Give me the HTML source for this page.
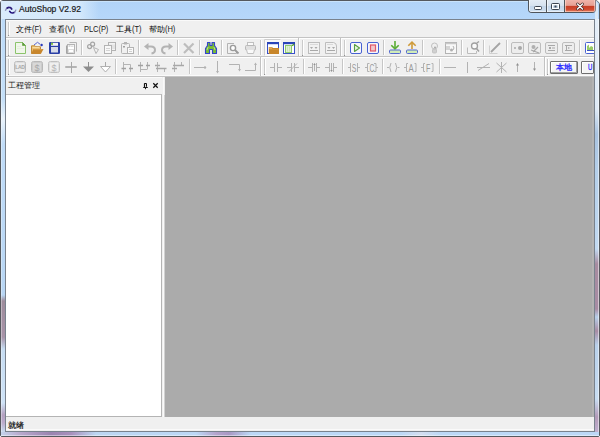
<!DOCTYPE html>
<html><head><meta charset="utf-8">
<style>
html,body{margin:0;padding:0;width:600px;height:437px;overflow:hidden;background:#fff;}
body{font-family:"Liberation Sans",sans-serif;position:relative;}
.a{position:absolute;}
.t{white-space:nowrap;color:#000;}
.l{display:inline-block;font-size:9px;letter-spacing:-0.1px;transform:scaleX(.84);transform-origin:0 50%;color:#202020}
</style></head><body>
<!-- window frame -->
<div class="a" style="left:0;top:0;width:598px;height:435px;border:1px solid #55595e;border-radius:3px 5px 2px 2px;background:#b8d7f6;"></div>
<!-- title bar gradient -->
<div class="a" style="left:1px;top:1px;width:598px;height:18px;border-radius:2px 4px 0 0;background:linear-gradient(#c9e3fb 0,#c9e3fb 1px,#b2d4f8 1px,#b6d7fa 100%);"></div>
<div class="a" style="left:1px;top:1px;width:100px;height:18px;background:linear-gradient(to right,rgba(222,238,252,.9) 0,rgba(218,236,252,.85) 78px,rgba(218,236,252,0) 98px);"></div>
<div class="a" style="left:595px;top:2px;width:3px;height:17px;background:#dbeaf7;border-radius:0 3px 0 0"></div>
<!-- left frame -->
<div class="a" style="left:1px;top:19px;width:4px;height:413px;background:linear-gradient(to bottom,#bcdaf8 0,#c4dff8 80px,#eaf3fb 100px,#c0dcf8 125px,#b8d6f4 276px,#9e8c9c 282px,#a893a8 318px,#c6dcf2 330px,#cfe3f7 384px,#b4a0c0 396px,#bcaccc 404px,#c8dcf0 413px);"></div>
<div class="a" style="left:1px;top:19px;width:1px;height:413px;background:rgba(255,255,255,.35)"></div>
<!-- right frame -->
<div class="a" style="left:595px;top:19px;width:4px;height:413px;background:linear-gradient(to bottom,#e4eef8 0,#dfeaf6 90px,#a9c3e0 115px,#b4cfea 150px,#c2daf2 230px,#a78ca0 245px,#a88ca4 290px,#b7d0ea 298px,#a88ca4 312px,#b8d0ea 326px,#c8ddf2 380px,#b39ab8 398px,#c0b0d0 413px);"></div>
<div class="a" style="left:598px;top:19px;width:1px;height:413px;background:rgba(255,255,255,.5)"></div>
<!-- bottom frame -->
<div class="a" style="left:1px;top:432px;width:598px;height:4px;background:linear-gradient(to right,#c4d4ec 0,#b8a8cc 20px,#9a84b0 50px,#a890bc 70px,#bcd6f2 95px,#bcd8f6 195px,#b4a4cc 215px,#a898c4 228px,#bcd8f6 250px,#bcd8f6 400px,#d4def0 420px,#bcd8f6 440px,#bcd8f6 598px);"></div>
<div class="a" style="left:1px;top:435px;width:598px;height:1px;background:rgba(255,255,255,.45)"></div>
<!-- client -->
<div class="a" style="left:5px;top:19px;width:588px;height:411px;border:1px solid #79828d;background:#f0f0f0;"></div>
<div class="a" style="left:6px;top:20px;width:588px;height:1px;background:#fafafa"></div>

<!-- title -->
<svg class="a" style="left:0;top:0" width="20" height="19">
  <path d="M5.3 10.8 Q6 8.6 7.6 7.8" stroke="#8c8cb4" stroke-width="1.3" fill="none"/>
  <path d="M7.2 8 Q8.2 7.3 9.3 7.4 Q10.9 7.5 11.7 9" stroke="#2c1c7c" stroke-width="1.7" fill="none" stroke-linecap="round"/>
  <path d="M9.7 11.4 Q10.7 13.1 12.4 13 Q13.7 12.9 14.4 12.3" stroke="#20107a" stroke-width="1.7" fill="none" stroke-linecap="round"/>
  <path d="M14.1 12.5 Q15.4 11.6 16 9.6" stroke="#8c8cb4" stroke-width="1.3" fill="none"/>
</svg>
<div class="a t" style="left:19px;top:3px;font-size:8.5px;line-height:12px;color:#1a1a1a;-webkit-text-stroke:0.2px #1a1a1a">AutoShop V2.92</div>

<!-- caption buttons -->
<div class="a" style="left:528px;top:0;width:66px;height:12px;border:1px solid #4f555c;border-right-color:#8c7c84;border-top:none;border-radius:0 0 4px 4px;overflow:hidden;background:#c9d9ea">
  <div class="a" style="left:0;top:0;width:17px;height:12px;background:linear-gradient(#e3ebf4,#d5e1ee 50%,#c3d5e9 51%,#cfe0f1);box-shadow:inset 1px 0 0 rgba(255,255,255,.6),inset 0 -1px 0 rgba(255,255,255,.5)"></div>
  <div class="a" style="left:17px;top:0;width:1px;height:12px;background:#4f555c"></div>
  <div class="a" style="left:18px;top:0;width:17px;height:12px;background:linear-gradient(#e3ebf4,#d5e1ee 50%,#c3d5e9 51%,#cfe0f1);box-shadow:inset 1px 0 0 rgba(255,255,255,.6),inset 0 -1px 0 rgba(255,255,255,.5)"></div>
  <div class="a" style="left:35px;top:0;width:1px;height:12px;background:#4f555c"></div>
  <div class="a" style="left:36px;top:0;width:30px;height:12px;background:linear-gradient(#f0b4aa,#e6a094 45%,#c83e26 52%,#d04a30 78%,#e4866a);box-shadow:inset 1px 0 0 rgba(255,220,210,.7),inset -1px 0 0 rgba(255,220,210,.6),inset 0 -1px 0 rgba(255,200,180,.7)"></div>
</div>
<svg class="a" style="left:528px;top:0" width="68" height="14">
  <rect x="6.5" y="6.5" width="7" height="3" rx="1" fill="#fff" stroke="#3c4450" stroke-width="1"/>
  <rect x="23.5" y="3.5" width="8" height="6" rx="1" fill="none" stroke="#3c4450" stroke-width="1"/>
  <rect x="24.5" y="4.5" width="6" height="4" fill="none" stroke="#fff" stroke-width="1"/>
  <rect x="26.5" y="5.5" width="2" height="2" fill="#3c4450"/>
  <path d="M49.5 4 L54.5 9 M54.5 4 L49.5 9" stroke="#4a3434" stroke-width="2.8" stroke-linecap="round"/>
  <path d="M49.5 4 L54.5 9 M54.5 4 L49.5 9" stroke="#fff" stroke-width="1.3" stroke-linecap="round"/>
</svg>

<!-- rebar lines -->
<div class="a" style="left:6px;top:37px;width:588px;height:1px;background:#c4c4c4"></div>
<div class="a" style="left:6px;top:38px;width:588px;height:1px;background:#fff"></div>
<div class="a" style="left:6px;top:56px;width:588px;height:1px;background:#c4c4c4"></div>
<div class="a" style="left:6px;top:57px;width:588px;height:1px;background:#fff"></div>
<div class="a" style="left:6px;top:75px;width:588px;height:1px;background:#fafafa"></div>
<div class="a" style="left:6px;top:76px;width:588px;height:1px;background:#c4c4c4"></div>
<div class="a" style="left:6px;top:77px;width:159px;height:1px;background:#fafafa"></div>

<!-- menu -->
<div class="a t" style="left:16px;top:23px;font-size:8px;line-height:12px;">文件<span class="l">(F)</span></div>
<div class="a t" style="left:49px;top:23px;font-size:8px;line-height:12px;">查看<span class="l">(V)</span></div>
<div class="a t" style="left:84px;top:23px;font-size:8px;line-height:12px;"><span class="l">PLC(P)</span></div>
<div class="a t" style="left:116px;top:23px;font-size:8px;line-height:12px;">工具<span class="l">(T)</span></div>
<div class="a t" style="left:149px;top:23px;font-size:8px;line-height:12px;">帮助<span class="l">(H)</span></div>

<!-- TOOLBARS SVG -->
<!--TBSTART-->
<svg class="a" style="left:0;top:0" width="600" height="80">

  <path d="M8.5 22 V35 M8.5 40 V55 M8.5 59 V74 M302.5 40 V55 M344.5 40 V55 M264.5 59 V74 M547.5 59 V74" stroke="#cacaca"/>
  <path d="M9.5 22 V35 M9.5 40 V55 M9.5 59 V74 M303.5 40 V55 M345.5 40 V55 M265.5 59 V74 M548.5 59 V74" stroke="#fff"/>
  <path d="M8 35.5 h1 M8 55.5 h1 M8 74.5 h1 M302 55.5 h1 M344 55.5 h1 M264 74.5 h1 M547 74.5 h1" stroke="#909090"/>
  <path d="M298.5 38 V56 M340.5 38 V56 M260.5 57 V76 M544.5 57 V76" stroke="#c2c2c2"/>
  <path d="M299.5 38 V56 M341.5 38 V56 M261.5 57 V76 M545.5 57 V76" stroke="#fff"/>
  <path d="M81.5 40 V55 M138.5 40 V55 M177.5 40 V55 M199.5 40 V55 M221.5 40 V55 M260.5 40 V55 M383.5 40 V55 M422.5 40 V55 M461.5 40 V55 M483.5 40 V55 M506.5 40 V55 M579.5 40 V55" stroke="#c6c6c6"/>
  <path d="M82.5 40 V55 M139.5 40 V55 M178.5 40 V55 M200.5 40 V55 M222.5 40 V55 M261.5 40 V55 M384.5 40 V55 M423.5 40 V55 M462.5 40 V55 M484.5 40 V55 M507.5 40 V55 M580.5 40 V55" stroke="#fff"/>
  <path d="M115.5 59 V74 M189.5 59 V74 M303.5 59 V74 M342.5 59 V74 M382.5 59 V74 M439.5 59 V74" stroke="#c6c6c6"/>
  <path d="M116.5 59 V74 M190.5 59 V74 M304.5 59 V74 M343.5 59 V74 M383.5 59 V74 M440.5 59 V74" stroke="#fff"/>

<path d="M15.5 42.5 H22.5 L25.5 45.5 V53.5 H15.5 Z" fill="#f0f6ea" stroke="#8cc46c"/>
<path d="M17 48.5 H24 M17 46.5 H21" stroke="#e2ecd8" stroke-width="0.8"/>
<path d="M22.5 42.5 L25.5 45.5 H22.5 Z" fill="#5a9c38" stroke="#5a9c38" stroke-width="0.6" stroke-linejoin="round"/>
<path d="M34 45 L37.5 42.3 L40 44.2" fill="none" stroke="#5a68d0" stroke-width="1"/>
<circle cx="41.6" cy="45" r="1.2" fill="#2838b8"/>
<path d="M31.5 45.8 H35 L36 46.8 H40.5 V53.5 H31.5 Z" fill="#ecc070" stroke="#c08a38"/>
<path d="M32.5 47.5 H39.5" stroke="#f8dca0" stroke-width="1"/>
<path d="M33.5 49 H43.5 L41 53.8 H31.2 Z" fill="#c8862c"/>
<path d="M33.8 49.6 H42.5" stroke="#d8a050" stroke-width="0.8"/>
<rect x="49" y="42" width="11" height="12" rx="1.2" fill="#2a3fa6"/>
<rect x="51" y="42.8" width="7" height="3" fill="#f4f4f4"/>
<rect x="51" y="42.8" width="2" height="2" fill="#7cc040"/>
<rect x="51" y="47" width="7" height="5.5" fill="#d6dbe8"/>
<path d="M69.5 42.5 H76.5 V51.5" fill="none" stroke="#b3b3b3"/>
<rect x="67.5" y="44.5" width="7" height="9" fill="#fff" stroke="#b3b3b3"/>
<path d="M66.5 45.5 V53.5 H73.5" fill="none" stroke="#a4a4a4"/>
<rect x="68.5" y="45.5" width="2" height="1" fill="#b3b3b3"/><rect x="71" y="45.5" width="2.5" height="1.5" fill="#ddd"/>
<rect x="68.5" y="49.5" width="5" height="3" fill="none" stroke="#dcdcdc"/>
<circle cx="89.6" cy="46.6" r="2" fill="none" stroke="#a4a4a4" stroke-width="1.2"/>
<circle cx="92.6" cy="44.2" r="2" fill="none" stroke="#a4a4a4" stroke-width="1.2"/>
<path d="M93.5 47.5 L98.5 49.5 L96 53.5 Z" fill="#f4f4f4" stroke="#b4b4b4" stroke-width="1"/>
<rect x="108.5" y="42.5" width="7" height="8" fill="#f4f4f4" stroke="#b3b3b3"/>
<path d="M110 44.5 V49 M112 44.5 V49 M114 44.5 V49" stroke="#d4d4d4"/>
<rect x="104.5" y="45.5" width="7" height="8" fill="#f8f8f8" stroke="#b3b3b3"/>
<path d="M106 48.5 H110 M106 50.5 H110" stroke="#d4d4d4"/>
<rect x="121.5" y="43.5" width="8" height="10" rx="1" fill="#f0f0f0" stroke="#b3b3b3"/>
<rect x="124" y="42" width="3" height="2.5" fill="#b3b3b3"/>
<rect x="127.5" y="47.5" width="6" height="6" fill="#fafafa" stroke="#b3b3b3"/>
<path d="M129 49.5 H132 M129 51.5 H132" stroke="#d0d0d0"/>
<rect x="123" y="46" width="2" height="1.5" fill="#a0a0a0"/>
<path d="M147 46.5 H151 Q155 46.5 155 50 Q155 53 151.5 53.5" fill="none" stroke="#b3b3b3" stroke-width="2"/>
<path d="M144 46.5 L148.5 43 V50 Z" fill="#b3b3b3"/>
<path d="M170 46.5 H166 Q162 46.5 162 50 Q162 53 165.5 53.5" fill="none" stroke="#b3b3b3" stroke-width="2"/>
<path d="M173 46.5 L168.5 43 V50 Z" fill="#b3b3b3"/>
<path d="M184 43.5 L193.5 53 M193.5 43.5 L184 53" stroke="#bdbdbd" stroke-width="2.2"/>
<path d="M207.5 42.5 H210 V45.5 H212 V42.5 H214.5 V45.5 L216.5 48.5 V53.5 H212.5 V49.5 H209.5 V53.5 H205.5 V48.5 L207.5 45.5 Z" fill="#78bc34" stroke="#3444cc" stroke-width="1.1" stroke-linejoin="round"/>
<path d="M208 47 L207 50 M214 47 L215 50" stroke="#c8e8a0" stroke-width="0.8"/>
<path d="M227.5 43.5 H234 M227.5 43.5 V53.5 H236.5 V52" fill="none" stroke="#b3b3b3"/>
<circle cx="233" cy="48" r="2.6" fill="#fff" stroke="#9a9a9a" stroke-width="1.4"/>
<path d="M235 50 L238.5 53.5" stroke="#9a9a9a" stroke-width="1.8"/>
<rect x="247.5" y="42.5" width="6" height="3" fill="#fafafa" stroke="#c0c0c0"/>
<rect x="245.5" y="45.5" width="10" height="4.5" rx="1" fill="#e0e0e0" stroke="#b8b8b8"/>
<path d="M246.5 49.5 L247.5 53.5 H253.5 L254.5 49.5" fill="#fafafa" stroke="#c0c0c0"/>
<rect x="264" y="39" width="17" height="17" fill="#f9f9f9"/>
<path d="M264.5 55.5 V39.5 H280.5" fill="none" stroke="#cfcfcf"/>
<rect x="267.5" y="42.5" width="11" height="11" fill="#fff" stroke="#3550c8"/>
<rect x="267" y="42" width="12" height="2.2" fill="#2a44b8"/>
<path d="M268.8 47 H272 L273 48 H279 V54 H268.8 Z" fill="#c8862a"/>
<path d="M269 47.5 H272 V48.6 H269 Z" fill="#ecc078"/>
<path d="M269.5 49.5 H278" stroke="#d89a40" stroke-width="0.6"/>
<rect x="283.5" y="42.5" width="11" height="11" fill="#fff" stroke="#3a52c8"/>
<rect x="283" y="42" width="12" height="2.2" fill="#2a44b8"/>
<rect x="285.5" y="45.5" width="6" height="7" fill="#e2f0d6" stroke="#8ccc68" stroke-width="1"/>
<path d="M287.5 46.5 V51.5 M289.5 46.5 V51.5" stroke="#c4e0ac" stroke-width="0.8"/>
<path d="M292 46 L294 44.2 M292.5 44.3 H294 V45.8" stroke="#58a030" stroke-width="1" fill="none"/>
<rect x="308.5" y="42.5" width="11" height="11" fill="#f2f2f2" stroke="#bdbdbd"/>
<path d="M310 44.5 H318" stroke="#dadada"/>
<path d="M310 47 H313 L311.5 49 Z M314.5 47 H317.5 L316 49 Z" fill="#a8a8a8"/>
<path d="M310 50.5 H318" stroke="#a8a8a8"/>
<path d="M325.5 42.5 H333.5 Q336.5 43 336.5 46 V53.5 H325.5 Z" fill="#f2f2f2" stroke="#bdbdbd"/>
<path d="M327 44.5 H333" stroke="#dadada"/>
<path d="M327.5 47 H330.5 L329 49 Z M332 47 H335 L333.5 49 Z" fill="#a8a8a8"/>
<path d="M327 50.5 H335" stroke="#a8a8a8"/>
<rect x="350.5" y="42.5" width="11" height="11" rx="1.5" fill="#f6f6fc" stroke="#4862d2"/>
<path d="M354.5 44.5 L359.5 48 L354.5 51.5 Z" fill="#e8f4e0" stroke="#58a040" stroke-width="1.1" stroke-linejoin="round"/>
<rect x="367.5" y="42.5" width="11" height="11" rx="1.5" fill="#f6f6fc" stroke="#4862d2"/>
<rect x="370.5" y="45" width="5" height="6" fill="#f0c8cc" stroke="#e05868" stroke-width="1.2"/>
<path d="M395 41 V48" stroke="#5aac34" stroke-width="1.6"/>
<path d="M391.3 45.2 L395 48.8 L398.7 45.2" fill="none" stroke="#5aac34" stroke-width="1.6"/>
<rect x="389.5" y="50" width="11" height="3.5" rx="1" fill="#d0ecb8" stroke="#5468d0"/>
<path d="M412 42.5 V49" stroke="#cf9a38" stroke-width="1.6"/>
<path d="M408.3 45.8 L412 42.2 L415.7 45.8" fill="none" stroke="#cf9a38" stroke-width="1.6"/>
<rect x="406.5" y="50" width="11" height="3.5" rx="1" fill="#d0ecb8" stroke="#5468d0"/>
<circle cx="434.5" cy="46" r="3" fill="#f0f0f0" stroke="#c0c0c0"/>
<rect x="432.5" y="49" width="4" height="4" rx="1" fill="#d0d0d0" stroke="#bcbcbc" stroke-width="0.8"/>
<circle cx="435" cy="47.5" r="1" fill="#a8a8a8"/>
<rect x="445.5" y="42.5" width="11" height="11" fill="#f8f8f8" stroke="#b3b3b3"/>
<path d="M445.5 43.5 H456.5" stroke="#c8c8c8" stroke-width="1.5"/>
<path d="M447 46 V50 M449 46 V50 M453 46 Q455 48 453 50" stroke="#b0b0b0" fill="none"/>
<circle cx="451.5" cy="50" r="1.5" fill="#b0b0b0"/>
<path d="M467.5 47.5 V53.5 H476.5 V51" fill="#f4f4f4" stroke="#bcbcbc"/>
<circle cx="474.5" cy="46" r="3" fill="#fafafa" stroke="#a0a0a0" stroke-width="1.3"/>
<path d="M476.8 43 L479 41.5 M476.5 48.5 L479 51.5" stroke="#a0a0a0" stroke-width="1.5"/>
<path d="M489.5 45.5 V53.5 H497.5" fill="none" stroke="#d0d0d0"/>
<path d="M491 52 L500 43" stroke="#a4a4a4" stroke-width="1.8"/>
<rect x="511.5" y="42.5" width="12" height="11" rx="1.5" fill="#ededed" stroke="#bdbdbd"/>
<rect x="528.5" y="42.5" width="12" height="11" rx="1.5" fill="#ededed" stroke="#bdbdbd"/>
<rect x="545.5" y="42.5" width="12" height="11" rx="1.5" fill="#ededed" stroke="#bdbdbd"/>
<rect x="562.5" y="42.5" width="12" height="11" rx="1.5" fill="#ededed" stroke="#bdbdbd"/>
<circle cx="515" cy="48" r="1" fill="#a8a8a8"/><circle cx="520" cy="48" r="2" fill="#a8a8a8"/>
<circle cx="533.5" cy="47" r="2" fill="#b0b0b0"/><path d="M531 50 L539 53 M538 47 L533 52" stroke="#a8a8a8" stroke-width="1.2"/>
<path d="M548 45.5 H555 M548 50.5 H555" stroke="#a8a8a8"/><rect x="549" y="47" width="2" height="2" fill="#a8a8a8"/><rect x="552" y="47.5" width="3" height="1" fill="#a8a8a8"/>
<path d="M565 45.5 H572 M565 50.5 H572 M566.5 45.5 V50.5" stroke="#a8a8a8"/><path d="M568 47 L570 48 L568 49Z" fill="#a8a8a8"/>
<path d="M594 42.5 H586.5 Q585.5 42.5 585.5 43.5 V52.5 Q585.5 53.5 586.5 53.5 H594" fill="#fff" stroke="#4862d2"/>
<path d="M587 50 V46 L589 44.5 V48 L591 46 L593 47 V50 Z" fill="#98cc68"/>
<path d="M587 50.5 H594" stroke="#3a52c0"/>
<rect x="14.5" y="61.5" width="11" height="11" rx="2" fill="#ececec" stroke="#bababa"/>
<rect x="15.5" y="62.5" width="9" height="9" rx="1" fill="none" stroke="#dedede"/>
<text x="20" y="69.3" font-size="5" text-anchor="middle" fill="#a6a6a6" font-family="Liberation Sans" font-weight="bold" letter-spacing="-0.3">LAD</text>
<rect x="31.5" y="61.5" width="11" height="11" rx="2" fill="#d8d8d8" stroke="#b8b8b8"/>
<rect x="32.5" y="62.5" width="9" height="9" rx="1" fill="none" stroke="#cbcbcb"/>
<text x="37" y="70.8" font-size="9" text-anchor="middle" fill="#a8a8a8" font-family="Liberation Sans">$</text>
<rect x="48.5" y="61.5" width="11" height="11" rx="2" fill="#efefef" stroke="#c0c0c0"/>
<rect x="49.5" y="62.5" width="9" height="9" rx="1" fill="none" stroke="#e0e0e0"/>
<text x="54" y="70.8" font-size="9" text-anchor="middle" fill="#b4b4b4" font-family="Liberation Sans">$</text>
<path d="M66 67 H76" stroke="#b4b4b4" stroke-width="2" stroke-linecap="round"/>
<path d="M71.5 62 V73" stroke="#a8a8a8" stroke-width="1"/>
<path d="M88.5 62 V67" stroke="#909090" stroke-width="1"/>
<path d="M83 66.5 H94 L88.5 72 Z" fill="#8c8c8c"/>
<path d="M105.5 62 V66.5" stroke="#a8a8a8" stroke-width="1"/>
<path d="M100.5 66.5 H110.5 L105.5 72 Z" fill="#fff" stroke="#b0b0b0"/>
<path d="M123.5 62 V72 M123.5 64.5 H130.5 V72" fill="none" stroke="#b4b4b4"/>
<path d="M121.5 68.5 H126 M129 68.5 H133" stroke="#a0a0a0" stroke-width="1.6"/>
<path d="M140.5 62 V72 M147.5 62 V69 M140.5 69.5 H147.5" fill="none" stroke="#b4b4b4"/>
<path d="M138 65.5 H143 M146 65.5 H150" stroke="#a0a0a0" stroke-width="1.6"/>
<path d="M157.5 62 V72 M164.5 69 V72" fill="none" stroke="#b4b4b4"/>
<path d="M155 65.5 H160 M156 68.5 H166.5" stroke="#a8a8a8" stroke-width="1.6"/>
<path d="M174.5 62 V72 M181.5 62 V66" fill="none" stroke="#b4b4b4"/>
<path d="M173 65.5 H184 M172 68.5 H177" stroke="#a8a8a8" stroke-width="1.6"/>
<path d="M194 67.5 H204" stroke="#b2b2b2"/><circle cx="205" cy="67.5" r="1.2" fill="#b2b2b2"/>
<path d="M217.5 61 V72" stroke="#b2b2b2"/><path d="M216 71 H219 L217.5 73.5Z" fill="#b2b2b2"/>
<path d="M229 64.5 H239.5 V69" fill="none" stroke="#b2b2b2"/><path d="M238 69 H241 L239.5 71.5Z" fill="#b2b2b2"/>
<path d="M245 70.5 H255.5 V65" fill="none" stroke="#b2b2b2"/><path d="M254 65 H257 L255.5 62.5Z" fill="#b2b2b2"/>
<path d="M270 67.5 H274.5 M277.5 67.5 H282 M274.5 63 V72 M277.5 63 V72" fill="none" stroke="#b2b2b2"/>
<path d="M287 67.5 H291.5 M294.5 67.5 H299 M291.5 63 V72 M294.5 63 V72" fill="none" stroke="#b2b2b2"/><path d="M289 71.5 L297 63.5" stroke="#b2b2b2"/>
<path d="M308 67.5 H312.5 M316.5 67.5 H320 M312.5 63 V72 M316.5 63 V72 M314.5 65 V71" fill="none" stroke="#b2b2b2"/><path d="M313.3 65 H315.7 L314.5 63Z" fill="#909090"/>
<path d="M325 67.5 H329.5 M333.5 67.5 H337 M329.5 63 V72 M333.5 63 V72 M331.5 63 V70" fill="none" stroke="#b2b2b2"/><path d="M330.3 70 H332.7 L331.5 72Z" fill="#909090"/>
<path d="M348 67.5 H350.5 M357.5 67.5 H360 M350.5 63 V72 M357.5 63 V72" fill="none" stroke="#b2b2b2"/>
<text x="351.8" y="71.5" font-size="10.5" textLength="4.6" lengthAdjust="spacingAndGlyphs" fill="#9a9a9a" font-family="Liberation Sans">S</text>
<path d="M365 67.5 H367.5 M376 67.5 H378 M369.5 63.5 H367.5 V71.5 H369.5 M374 63.5 H376 V71.5 H374" fill="none" stroke="#b2b2b2"/>
<text x="369.6" y="71.5" font-size="10.5" textLength="4.8" lengthAdjust="spacingAndGlyphs" fill="#9a9a9a" font-family="Liberation Sans">C</text>
<path d="M387 67.5 H389 M397.5 67.5 H399.5 M391 63 Q388.5 67.5 391 72 M395.5 63 Q398 67.5 395.5 72" fill="none" stroke="#b2b2b2"/>
<path d="M404 67.5 H406 M408 63.5 H406.5 V71.5 H408 M414.5 63.5 H416 V71.5 H414.5" fill="none" stroke="#b2b2b2"/>
<text x="408.6" y="71.5" font-size="10.5" textLength="5.2" lengthAdjust="spacingAndGlyphs" fill="#9a9a9a" font-family="Liberation Sans">A</text>
<path d="M421 67.5 H423 M425 63.5 H423.5 V71.5 H425 M431.5 63.5 H433 V71.5 H431.5" fill="none" stroke="#b2b2b2"/>
<text x="426" y="71.5" font-size="10.5" textLength="4.4" lengthAdjust="spacingAndGlyphs" fill="#9a9a9a" font-family="Liberation Sans">F</text>
<path d="M444 67.5 H456" stroke="#b2b2b2"/>
<path d="M467.5 62 V73" stroke="#b2b2b2"/>
<path d="M477 67.5 H490 M478 70.5 L489 63.5" stroke="#b2b2b2"/>
<path d="M501.5 62 V73 M496.5 63 L506.5 72 M506.5 63 L496.5 72" stroke="#b2b2b2"/>
<path d="M517.5 65 V72" stroke="#b2b2b2"/><path d="M516 65.5 H519 L517.5 63Z" fill="#909090"/>
<path d="M534.5 62 V69" stroke="#b2b2b2"/><path d="M533 68.5 H536 L534.5 71Z" fill="#909090"/>
</svg>
<div class="a" style="left:550px;top:61px;width:28px;height:13px;box-sizing:border-box;border:1px solid #6e6e6e;border-radius:1px;background:#f4f4f4;box-shadow:inset -1px -1px 0 #a0a0a0,inset 1px 1px 0 #fff"></div>
<div class="a" style="left:556px;top:62px;width:20px;font-size:8px;line-height:11px;color:#2a2aff;white-space:nowrap;-webkit-text-stroke:0.35px #2a2aff">本地</div>
<div class="a" style="left:581px;top:61px;width:13px;height:13px;box-sizing:border-box;border:1px solid #6e6e6e;border-radius:1px;background:#f4f4f4;box-shadow:inset 1px 1px 0 #fff"></div>
<div class="a" style="left:587.5px;top:62px;font-size:8.5px;line-height:11px;color:#2a2aff;white-space:nowrap;-webkit-text-stroke:0.3px #2a2aff;transform:scaleX(.7);transform-origin:0 0">U</div>
<!--TBEND-->

<!-- panel -->
<div class="a" style="left:6px;top:94px;width:156px;height:323px;background:#fff;border-top:1px solid #c0c0c0;border-right:1px solid #b4b4b4;border-bottom:1px solid #b4b4b4;box-sizing:border-box"></div>
<div class="a t" style="left:8px;top:80px;font-size:8px;line-height:12px;color:#222">工程管理</div>
<svg class="a" style="left:140px;top:80px" width="22" height="12">
  <path d="M4.5 3.5 H6.5 V6.5 L7.5 7.5 H3.5 L4.5 6.5 Z" fill="none" stroke="#111" stroke-width="1"/>
  <path d="M4.5 3.5 V7" stroke="#111" stroke-width="1.2"/>
  <path d="M5.5 7.5 V9.2" stroke="#222" stroke-width="1"/>
  <path d="M13.3 3.3 L17.7 7.7 M17.7 3.3 L13.3 7.7" stroke="#111" stroke-width="1.25"/>
</svg>
<!-- splitter -->
<div class="a" style="left:162px;top:77px;width:3px;height:340px;background:#f0f0f0"></div>
<div class="a" style="left:163px;top:77px;width:1px;height:340px;background:#fafafa"></div>
<div class="a" style="left:164px;top:95px;width:1px;height:322px;background:#d2d2d2"></div>
<!-- MDI -->
<div class="a" style="left:165px;top:77px;width:427px;height:340px;background:#ababab"></div>
<div class="a" style="left:592px;top:77px;width:2px;height:340px;background:#b3b3b3"></div>
<!-- status -->
<div class="a" style="left:6px;top:429px;width:588px;height:1px;background:#fafafa"></div>
<div class="a t" style="left:8px;top:420px;font-size:8px;line-height:12px;-webkit-text-stroke:0.15px #000">就绪</div>
</body></html>
